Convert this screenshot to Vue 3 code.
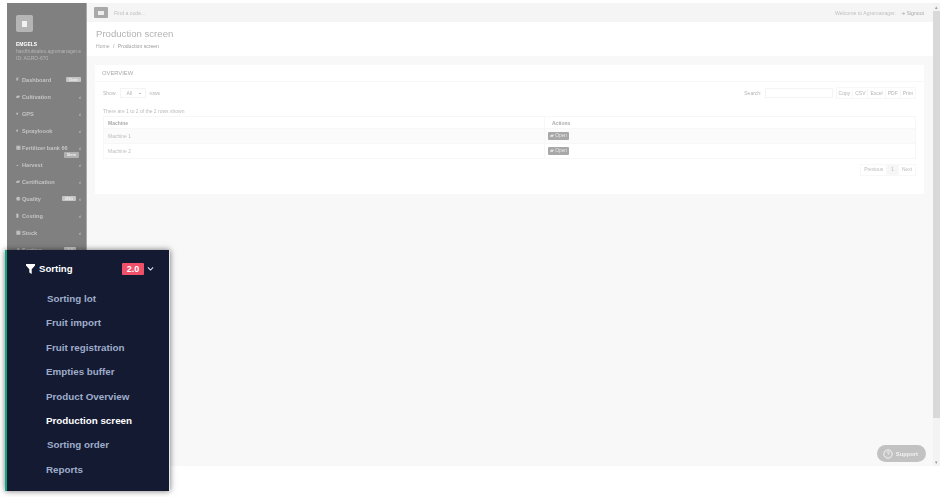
<script setup>
import { ref } from 'vue'

const menu = ref([
  { name: 'Dashboard', icon: '#', badge: 'Date', arrow: false },
  { name: 'Cultivation', icon: '▰', arrow: true },
  { name: 'GPS', icon: '♦', arrow: true },
  { name: 'Sprayloook', icon: '♦', arrow: true },
  { name: 'Fertilizer bank 66', icon: '▦', arrow: true, under: 'Beta' },
  { name: 'Harvest', icon: '◒', arrow: true },
  { name: 'Certification', icon: '▰', arrow: true },
  { name: 'Quality', icon: '◉', badge: '2NG', arrow: true },
  { name: 'Costing', icon: '▮', arrow: true },
  { name: 'Stock', icon: '▦', arrow: true },
  { name: 'Sorting', icon: '▼', badge: '2.0', arrow: true }
])

const subItems = ref([
  { name: 'Sorting lot', shift: true },
  { name: 'Fruit import' },
  { name: 'Fruit registration' },
  { name: 'Empties buffer' },
  { name: 'Product Overview' },
  { name: 'Production screen', active: true },
  { name: 'Sorting order', shift: true },
  { name: 'Reports' }
])

const machines = ref(['Machine 1', 'Machine 2'])
const exportButtons = ref(['Copy', 'CSV', 'Excel', 'PDF', 'Print'])
</script>

<template>
  <div class="page">
    <div class="screen">
      <aside class="sidebar">
        <div class="logo"><span></span></div>
        <div class="user-name">EMGELS</div>
        <div class="user-line">hardfruitsales.agromanager.e</div>
        <div class="user-line">ID: AGRO-670</div>
        <nav class="nav">
          <div class="nav-item" v-for="item in menu" :key="item.name">
            <span class="nav-icon">{{ item.icon }}</span>
            <span class="nav-name">{{ item.name }}</span>
            <span v-if="item.badge" class="nav-badge">{{ item.badge }}</span>
            <span v-if="item.arrow" class="nav-arrow">‹</span>
            <span v-if="item.under" class="nav-under">{{ item.under }}</span>
          </div>
        </nav>
      </aside>

      <main class="main">
        <header class="topbar">
          <button class="toggle"><span></span></button>
          <span class="find">Find a code...</span>
          <span class="welcome">Welcome to Agromanager.</span>
          <span class="signout">➔ Signout</span>
        </header>

        <section class="heading">
          <h1>Production screen</h1>
          <div class="crumbs">Home <i>/</i> <b>Production screen</b></div>
        </section>

        <section class="content">
          <div class="card">
            <div class="card-title">OVERVIEW</div>
            <div class="card-body">
              <div class="tools">
                <span>Show</span>
                <span class="select">All <em>⌄</em></span>
                <span>rows</span>
                <span class="search-label">Search:</span>
                <span class="search"></span>
                <span class="exports">
                  <span v-for="b in exportButtons" :key="b">{{ b }}</span>
                </span>
              </div>
              <p class="info">There are 1 to 2 of the 2 rows shown</p>
              <table>
                <thead>
                  <tr>
                    <th class="col-machine">Machine</th>
                    <th>Actions</th>
                  </tr>
                </thead>
                <tbody>
                  <tr v-for="m in machines" :key="m">
                    <td>{{ m }}</td>
                    <td class="cell-open"><span class="open">▰ Open</span></td>
                  </tr>
                </tbody>
              </table>
              <div class="pager">
                <span>Previous</span>
                <span class="current">1</span>
                <span>Next</span>
              </div>
            </div>
          </div>
          <div class="support">
            <svg width="10" height="10" viewBox="0 0 12 12" fill="none" stroke="#fff" stroke-width="1">
              <circle cx="6" cy="6" r="5" />
              <path d="M4.6 4.6a1.4 1.4 0 1 1 2 1.3c-.4.2-.6.5-.6 1M6 8.6v.4" />
            </svg>
            Support
          </div>
        </section>
      </main>

      <div class="scrollbar">
        <span class="scroll-arrow">▴</span>
        <span class="scroll-thumb"></span>
        <span class="scroll-arrow">▾</span>
      </div>
    </div>

    <div class="popup">
      <div class="popup-head">
        <svg class="funnel" width="9" height="10" viewBox="0 0 9 10">
          <path d="M0 0h9v1.6L5.7 5.2V10L3.3 8.6V5.2L0 1.6z" fill="#fff" />
        </svg>
        <span class="popup-title">Sorting</span>
        <span class="popup-badge">2.0</span>
        <svg class="chevron" width="7" height="6" viewBox="0 0 8 6" fill="none" stroke="#dfe4ee" stroke-width="1.3">
          <path d="M1 1.2l3 3 3-3" />
        </svg>
      </div>
      <ul class="popup-list">
        <li
          v-for="s in subItems"
          :key="s.name"
          :class="{ active: s.active, shift: s.shift }"
        >{{ s.name }}</li>
      </ul>
    </div>
  </div>
</template>

<style scoped>
.page {
  position: relative;
  width: 950px;
  height: 497px;
  overflow: hidden;
  background: #fff;
  font-family: "Liberation Sans", Arial, sans-serif;
}

.screen {
  display: flex;
  width: 933px;
  height: 463px;
  margin: 3px 0 0 7px;
  background: #f8f8f8;
  filter: blur(0.6px);
}

.sidebar {
  flex: 0 0 80px;
  background: #808080;
  border-right: 1px solid #aaa;
  padding-top: 12px;
  box-sizing: border-box;
  color: #ddd;
  overflow: hidden;
}

.logo {
  width: 17px;
  height: 17px;
  margin: 0 0 0 9px;
  background: #b5b5b5;
  border-radius: 2px;
  display: flex;
  align-items: center;
  justify-content: center;
}

.logo span {
  width: 5px;
  height: 6px;
  background: #f2f2f2;
}

.user-name {
  margin: 9px 0 0 9px;
  font-size: 5px;
  font-weight: bold;
  color: #fff;
  line-height: 7px;
}

.user-line {
  margin-left: 9px;
  font-size: 5px;
  line-height: 7px;
  color: #b5b5b5;
  white-space: nowrap;
}

.nav {
  margin-top: 9px;
}

.nav-item {
  position: relative;
  display: flex;
  align-items: center;
  height: 17px;
  padding: 0 3px 0 9px;
  font-size: 5.6px;
  font-weight: bold;
  color: #c4c4c4;
  white-space: nowrap;
}

.nav-icon {
  width: 6px;
  font-size: 4.5px;
}

.nav-name {
  flex: 1;
}

.nav-badge {
  background: #c4c4c4;
  color: #eee;
  font-size: 4px;
  line-height: 5px;
  padding: 0 3px;
  border-radius: 1px;
  margin-right: 2px;
}

.nav-arrow {
  width: 4px;
  font-size: 6px;
  margin-left: 1px;
}

.nav-under {
  position: absolute;
  right: 7px;
  top: 13px;
  background: #b0b0b0;
  color: #eee;
  font-size: 4px;
  line-height: 6px;
  padding: 0 3px;
  border-radius: 1px;
}

.main {
  flex: 1;
  min-width: 0;
  display: flex;
  flex-direction: column;
}

.topbar {
  display: flex;
  align-items: center;
  height: 19px;
  flex: none;
  padding: 0 9px 0 7px;
  background: #f5f5f5;
  font-size: 5.2px;
  color: #c0c0c0;
}

.toggle {
  width: 14px;
  height: 11px;
  padding: 0;
  border: 0;
  border-radius: 1px;
  background: #a9a9a9;
  display: flex;
  align-items: center;
  justify-content: center;
}

.toggle span {
  width: 6px;
  height: 4px;
  background: #eee;
}

.find {
  margin-left: 6px;
  flex: 1;
}

.welcome {
  margin-right: 5px;
}

.signout {
  color: #aaa;
}

.heading {
  flex: none;
  height: 34px;
  box-sizing: border-box;
  padding: 6px 0 0 9px;
  background: #fff;
}

.heading h1 {
  margin: 0;
  font-size: 9.6px;
  font-weight: normal;
  line-height: 12px;
  color: #b2b2b2;
}

.crumbs {
  margin-top: 3px;
  font-size: 5.1px;
  color: #aaa;
}

.crumbs i {
  font-style: normal;
  margin: 0 2px;
}

.crumbs b {
  font-weight: normal;
  color: #999;
}

.content {
  position: relative;
  flex: 1;
  padding: 9px 9px 0 8px;
}

.card {
  height: 129px;
  box-sizing: border-box;
  background: #fff;
}

.card-title {
  height: 17px;
  box-sizing: border-box;
  padding: 4px 0 0 7px;
  font-size: 5.8px;
  line-height: 8px;
  color: #aaa;
  border-bottom: 1px solid #f7f7f7;
}

.card-body {
  padding: 5px 8px 0 8px;
}

.tools {
  display: flex;
  align-items: center;
  gap: 3px;
  height: 12px;
  font-size: 5px;
  color: #b5b5b5;
}

.select {
  width: 26px;
  height: 10px;
  box-sizing: border-box;
  margin: 0 1px;
  padding-left: 6px;
  border: 1px solid #f4f4f4;
  display: flex;
  align-items: center;
  justify-content: space-between;
}

.select em {
  font-style: normal;
  color: #777;
  margin: -2px 3px 0 0;
}

.search-label {
  margin-left: auto;
}

.search {
  width: 68px;
  height: 10px;
  box-sizing: border-box;
  border: 1px solid #f4f4f4;
}

.exports {
  display: flex;
  height: 10px;
  align-items: center;
  border: 1px solid #f7f7f7;
}

.exports span {
  padding: 0 2px;
  border-right: 1px solid #f7f7f7;
  line-height: 9px;
}

.exports span:last-child {
  border-right: 0;
}

.info {
  margin: 9px 0 2px;
  font-size: 5px;
  line-height: 6px;
  color: #bbb;
}

table {
  width: 100%;
  border-collapse: collapse;
  border: 1px solid #f7f7f7;
  font-size: 5px;
  color: #bdbdbd;
}

th {
  height: 11px;
  padding: 0 0 0 7px;
  text-align: left;
  color: #aaa;
  font-weight: bold;
  border-bottom: 1px solid #f7f7f7;
}

.col-machine {
  width: 436px;
  padding-left: 4px;
  border-right: 1px solid #f7f7f7;
}

td {
  height: 14px;
  padding: 0 0 0 4px;
  border-bottom: 1px solid #f7f7f7;
}

tbody tr:first-child {
  background: #fbfbfb;
}

td:first-child {
  border-right: 1px solid #f7f7f7;
}

.cell-open {
  padding-left: 3px;
}

.open {
  display: inline-block;
  width: 21px;
  height: 8px;
  text-align: center;
  line-height: 8px;
  background: #a8a8a8;
  color: #e6e6e6;
  font-size: 4.8px;
  border-radius: 1px;
}

.pager {
  display: flex;
  justify-content: flex-end;
  margin-top: 5px;
  font-size: 4.9px;
  color: #bbb;
}

.pager span {
  height: 10px;
  line-height: 10px;
  padding: 0 3px;
  border: 1px solid #f8f8f8;
}

.pager .current {
  background: #f6f6f6;
}

.support {
  position: absolute;
  right: 7px;
  bottom: 4px;
  display: flex;
  align-items: center;
  gap: 3px;
  height: 17px;
  padding: 0 8px 0 6px;
  border-radius: 9px;
  background: #c2c2c2;
  color: #f2f2f2;
  font-size: 5.8px;
  font-weight: bold;
}

.scrollbar {
  flex: 0 0 7px;
  display: flex;
  flex-direction: column;
  align-items: center;
  background: #f3f3f3;
  color: #999;
  font-size: 5px;
}

.scroll-arrow {
  height: 8px;
  line-height: 8px;
}

.scroll-thumb {
  width: 100%;
  flex: 1;
  margin-bottom: 40px;
  background: #d9d9d9;
}

.popup {
  position: absolute;
  left: 5px;
  top: 250px;
  width: 165px;
  height: 241px;
  box-sizing: border-box;
  border-left: 2px solid #12a67f;
  border-right: 1px solid #e8e8e8;
  background: #131a32;
  box-shadow: 0 0 6px rgba(0, 0, 0, 0.55);
}

.popup-head {
  display: flex;
  align-items: center;
  height: 37px;
  padding: 0 15px 0 19px;
  box-sizing: border-box;
}

.funnel {
  flex: none;
}

.popup-title {
  flex: 1;
  margin-left: 4px;
  color: #fff;
  font-size: 9.6px;
  font-weight: bold;
}

.popup-badge {
  width: 22px;
  height: 12px;
  line-height: 12px;
  text-align: center;
  background: #f0506a;
  color: #fff;
  border-radius: 1px;
  font-size: 9px;
  font-weight: bold;
  margin-right: 3px;
}

.popup-list {
  list-style: none;
  margin: 0;
  padding: 0 0 0 39px;
}

.popup-list li {
  height: 24.4px;
  line-height: 24.4px;
  font-size: 9.8px;
  font-weight: bold;
  color: #9fadcb;
  white-space: nowrap;
}

.popup-list li.shift {
  margin-left: 1px;
}

.popup-list li.active {
  color: #fff;
}
</style>

<style>
html, body {
  margin: 0;
  background: #fff;
}
</style>
